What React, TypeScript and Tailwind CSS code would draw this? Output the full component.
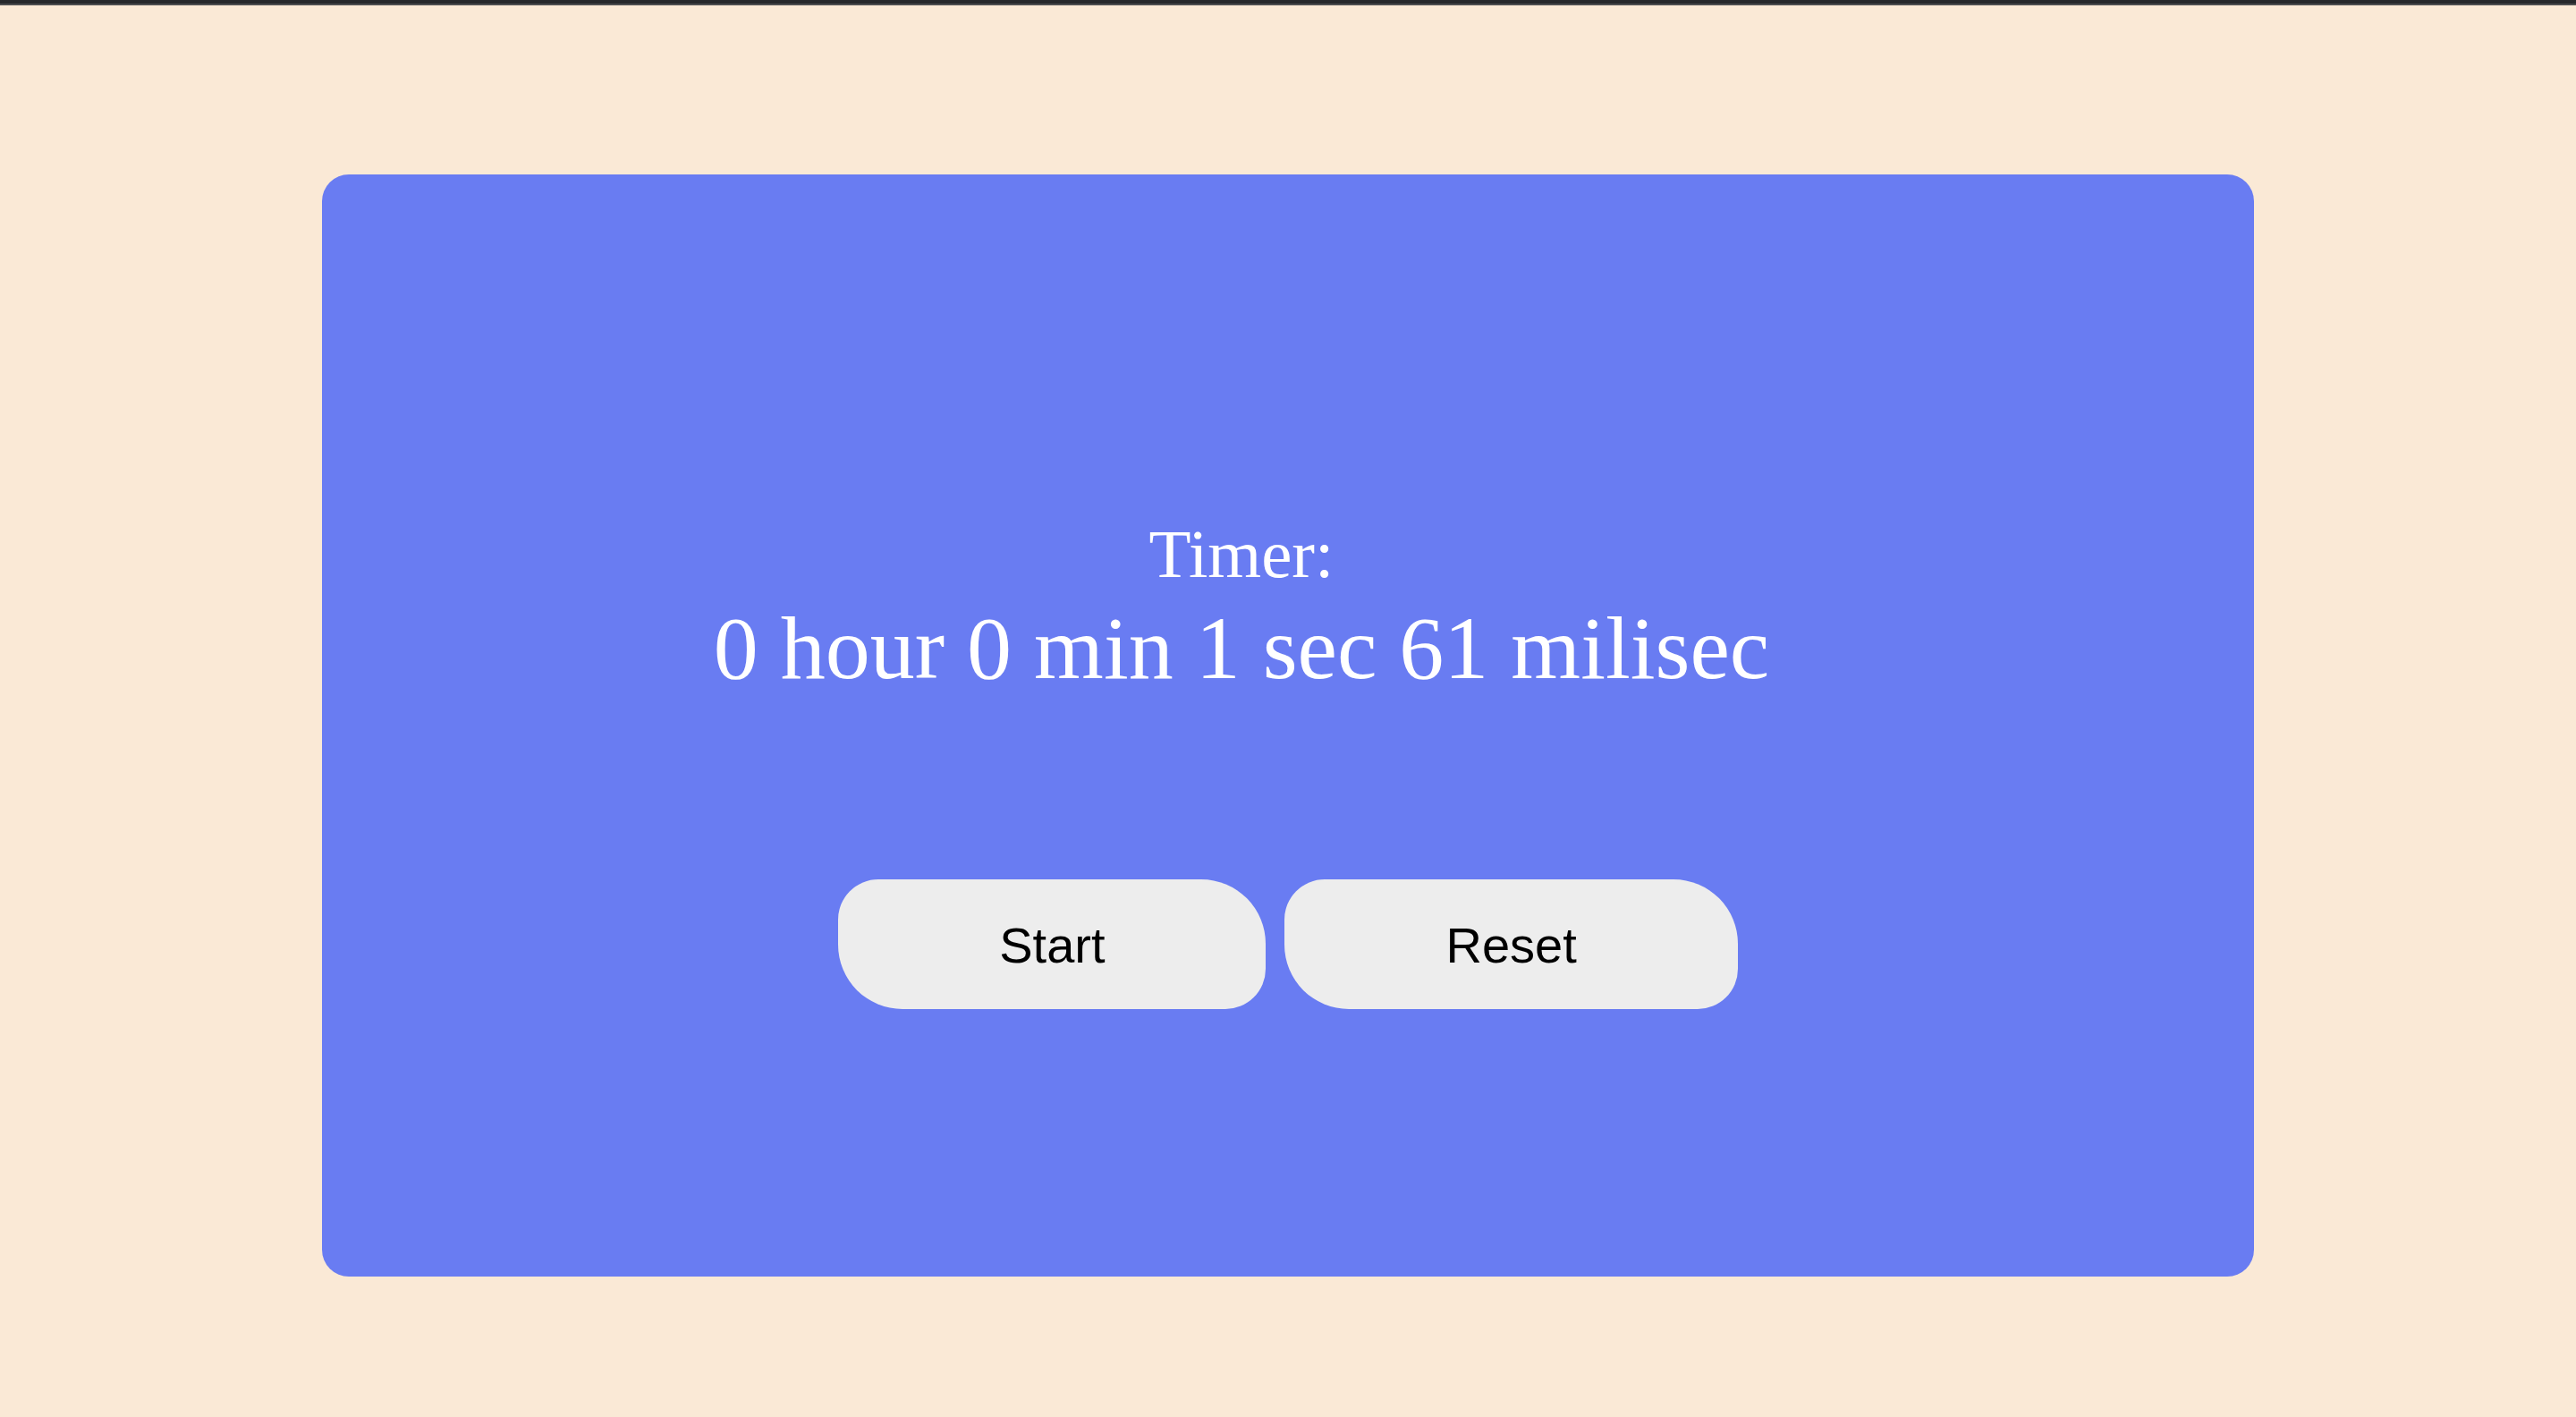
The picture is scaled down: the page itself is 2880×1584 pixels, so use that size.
const App = () => {
  return (
    <div className="min-h-screen bg-[#fae9d6] pb-[157px]">
      <div className="h-[4px] bg-[#26282c]" />
      <div className="h-[2px] bg-[#4b4c4f]" />

      <div className="mx-auto mt-[189px] flex h-[1232px] w-[2160px] flex-col items-center rounded-[30px] bg-[#697cf2] pt-[386px]">
        <div className="flex w-full flex-col items-center pr-[104px] text-white [font-family:'Liberation_Serif',serif]">
          <h2 className="text-[77px] leading-none">Timer:</h2>
          <h1 className="mt-[17px] text-[100px] leading-none">
            0 hour 0 min 1 sec 61 milisec
          </h1>
        </div>

        <div className="mt-[208px] flex gap-[21px] [font-family:'Liberation_Sans',Arial,sans-serif]">
          <button className="h-[145px] rounded-[45px_72px_45px_72px] bg-[#ededed] px-[180px] pt-[2px] text-[56px] text-black">
            Start
          </button>
          <button className="h-[145px] rounded-[45px_72px_45px_72px] bg-[#ededed] px-[180px] pt-[2px] text-[56px] text-black">
            Reset
          </button>
        </div>
      </div>
    </div>
  );
};

export default App;
